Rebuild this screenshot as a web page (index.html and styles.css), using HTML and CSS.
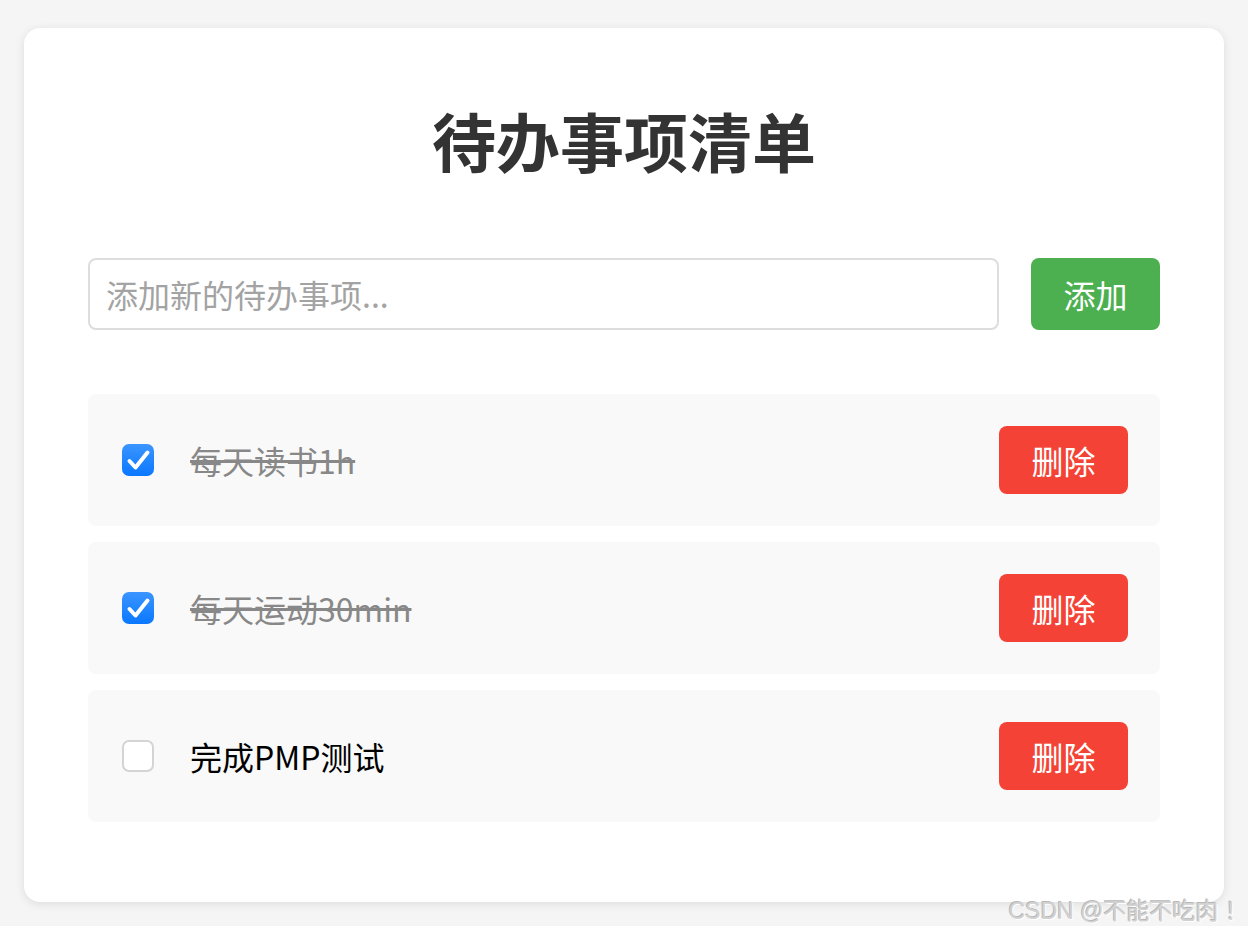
FILE: index.html
```html
<!DOCTYPE html>
<html lang="zh-CN">
<head>
<meta charset="utf-8">
<title>待办事项清单</title>
<link rel="stylesheet" href="styles.css">
</head>
<body>
<div class="card">
  <h1 class="title">待办事项清单</h1>
  <div class="add-row">
    <input class="add-input" type="text" placeholder="添加新的待办事项...">
    <button class="btn btn-add">添加</button>
  </div>
  <ul class="list">
    <li class="item done">
      <span class="check on"><svg viewBox="0 0 32 32" width="32" height="32"><path d="M7.5 17 L13.5 23.5 L25.5 8.5" fill="none" stroke="#fff" stroke-width="4" stroke-linecap="round" stroke-linejoin="round"/></svg></span>
      <span class="text">每天读书1h</span>
      <button class="btn btn-del">删除</button>
    </li>
    <li class="item done">
      <span class="check on"><svg viewBox="0 0 32 32" width="32" height="32"><path d="M7.5 17 L13.5 23.5 L25.5 8.5" fill="none" stroke="#fff" stroke-width="4" stroke-linecap="round" stroke-linejoin="round"/></svg></span>
      <span class="text">每天运动30min</span>
      <button class="btn btn-del">删除</button>
    </li>
    <li class="item">
      <span class="check"></span>
      <span class="text">完成PMP测试</span>
      <button class="btn btn-del">删除</button>
    </li>
  </ul>
</div>
<div class="watermark">CSDN @不能不吃肉 ！</div>
</body>
</html>
```
FILE: styles.css
```css
* { box-sizing: border-box; }
html, body { margin: 0; padding: 0; overflow: hidden; }
body {
  background: #f5f5f5;
  font-family: "Noto Sans CJK SC", "Noto Sans", sans-serif;
  height: 926px;
  position: relative;
  padding-top: 28px;
}
.card {
  width: 1200px;
  margin-left: 24px;
  background: #fff;
  border-radius: 16px;
  box-shadow: 0 2px 10px rgba(0,0,0,0.10);
  padding: 71px 64px 80px;
}
.title {
  margin: 0 0 79px;
  text-align: center;
  font-size: 64px;
  line-height: 80px;
  font-weight: 700;
  color: #333;
}
.add-row {
  display: flex;
  gap: 32px;
  margin-bottom: 64px;
}
.add-input {
  flex: 1;
  height: 72px;
  border: 2px solid #ddd;
  border-radius: 8px;
  padding: 0 16px;
  font-family: inherit;
  font-size: 32px;
  color: #333;
  outline: none;
}
.add-input::placeholder { color: #a3a3a3; }
.btn {
  border: none;
  border-radius: 8px;
  color: #fff;
  font-family: inherit;
  font-size: 32px;
  width: 129px;
  padding: 0;
  cursor: pointer;
}
.btn-add { background: #4caf50; height: 72px; }
.btn-del { background: #f44336; height: 68px; margin-left: auto; }
.list {
  list-style: none;
  margin: 0;
  padding: 0;
  display: flex;
  flex-direction: column;
  gap: 16px;
}
.item {
  height: 132px;
  background: #f9f9f9;
  border-radius: 8px;
  display: flex;
  align-items: center;
  padding: 0 32px 0 34px;
}
.check {
  width: 32px;
  height: 32px;
  border-radius: 7px;
  border: 2px solid #d4d4d4;
  background: #fff;
  flex: none;
  display: flex;
  margin-right: 36px;
}
.check.on {
  border: none;
  background: linear-gradient(#3b95ff, #0a78ff);
}
.text {
  font-size: 32px;
  line-height: 40px;
  color: #000;
}
.item.done .text {
  color: #888;
  text-decoration: line-through;
}
.watermark {
  position: absolute;
  right: 0;
  top: 892px;
  white-space: nowrap;
  font-family: "Liberation Sans", "Noto Sans CJK SC", sans-serif;
  font-size: 23px;
  color: #d2d2d2;
  text-shadow: -1px -1px 0 #b8b8b8, 1px 1px 0 #fff;
}
```
